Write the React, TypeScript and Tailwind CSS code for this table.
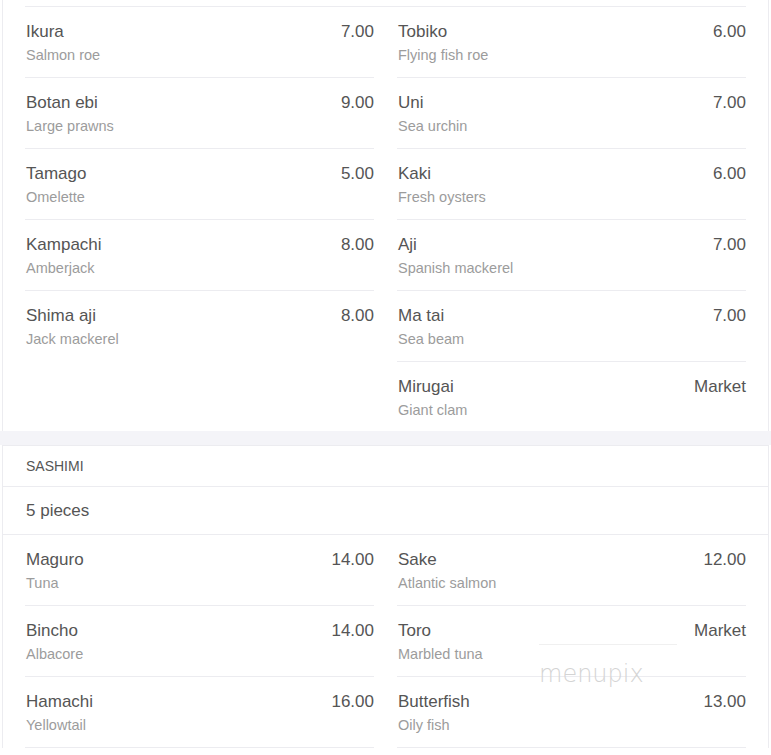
import React from "react";

type Item = { name: string; desc: string; price: string };

const nigiriLeft: Item[] = [
  { name: "Ikura", desc: "Salmon roe", price: "7.00" },
  { name: "Botan ebi", desc: "Large prawns", price: "9.00" },
  { name: "Tamago", desc: "Omelette", price: "5.00" },
  { name: "Kampachi", desc: "Amberjack", price: "8.00" },
  { name: "Shima aji", desc: "Jack mackerel", price: "8.00" },
];

const nigiriRight: Item[] = [
  { name: "Tobiko", desc: "Flying fish roe", price: "6.00" },
  { name: "Uni", desc: "Sea urchin", price: "7.00" },
  { name: "Kaki", desc: "Fresh oysters", price: "6.00" },
  { name: "Aji", desc: "Spanish mackerel", price: "7.00" },
  { name: "Ma tai", desc: "Sea beam", price: "7.00" },
  { name: "Mirugai", desc: "Giant clam", price: "Market" },
];

const sashimiLeft: Item[] = [
  { name: "Maguro", desc: "Tuna", price: "14.00" },
  { name: "Bincho", desc: "Albacore", price: "14.00" },
  { name: "Hamachi", desc: "Yellowtail", price: "16.00" },
];

const sashimiRight: Item[] = [
  { name: "Sake", desc: "Atlantic salmon", price: "12.00" },
  { name: "Toro", desc: "Marbled tuna", price: "Market" },
  { name: "Butterfish", desc: "Oily fish", price: "13.00" },
];

function MenuRow({ item, last }: { item: Item; last: boolean }) {
  return (
    <div className={"h-[71px] shrink-0 pt-[15px] pl-px " + (last ? "" : "border-b border-[#ececf0]")}>
      <div className="flex items-start justify-between">
        <div>
          <p className="text-[17px] leading-5 text-[#555]">{item.name}</p>
          <p className="mt-[3px] text-[14.5px] leading-5 text-[#9c9c9c]">{item.desc}</p>
        </div>
        <p className="text-[17px] leading-5 text-[#555]">{item.price}</p>
      </div>
    </div>
  );
}

function Column({ items, lastLine }: { items: Item[]; lastLine?: boolean }) {
  return (
    <div className="flex flex-col">
      {items.map((item, i) => (
        <MenuRow key={item.name} item={item} last={!lastLine && i === items.length - 1} />
      ))}
    </div>
  );
}

export default function App() {
  return (
    <div className="relative h-[755px] overflow-hidden bg-white px-[2px] font-['Liberation_Sans',Arial,sans-serif]">
      {/* nigiri, continued from above */}
      <div className="h-[431px] overflow-hidden border-x border-[#ececf0] bg-white px-[22px]">
        <div className="h-[7px] border-b border-[#ececf0]" />
        <div className="grid grid-cols-2 gap-x-[23px]">
          <Column items={nigiriLeft} />
          <Column items={nigiriRight} />
        </div>
      </div>

      <div className="-mx-[2px] h-[14px] bg-[#f4f4f8]" />

      {/* sashimi */}
      <div className="border-x border-t border-[#ececf0] bg-white">
        <div className="flex h-[41px] items-center border-b border-[#ececf0] px-[23px]">
          <p className="text-[14px] text-[#555]">SASHIMI</p>
        </div>
        <div className="flex h-[48px] items-center border-b border-[#ececf0] px-[23px]">
          <p className="text-[17px] text-[#555]">5 pieces</p>
        </div>
        <div className="grid grid-cols-2 gap-x-[23px] px-[22px]">
          <Column items={sashimiLeft} lastLine />
          <Column items={sashimiRight} lastLine />
        </div>
      </div>

      <div className="pointer-events-none absolute left-[539px] top-[644px] select-none">
        <div className="mb-[15px] h-px w-[138px] bg-[#f0f0f0]" />
        <p className="font-['DejaVu_Sans',sans-serif] text-[24px] font-extralight leading-7 text-[#d4d4d4]">
          menupix
        </p>
      </div>
    </div>
  );
}
